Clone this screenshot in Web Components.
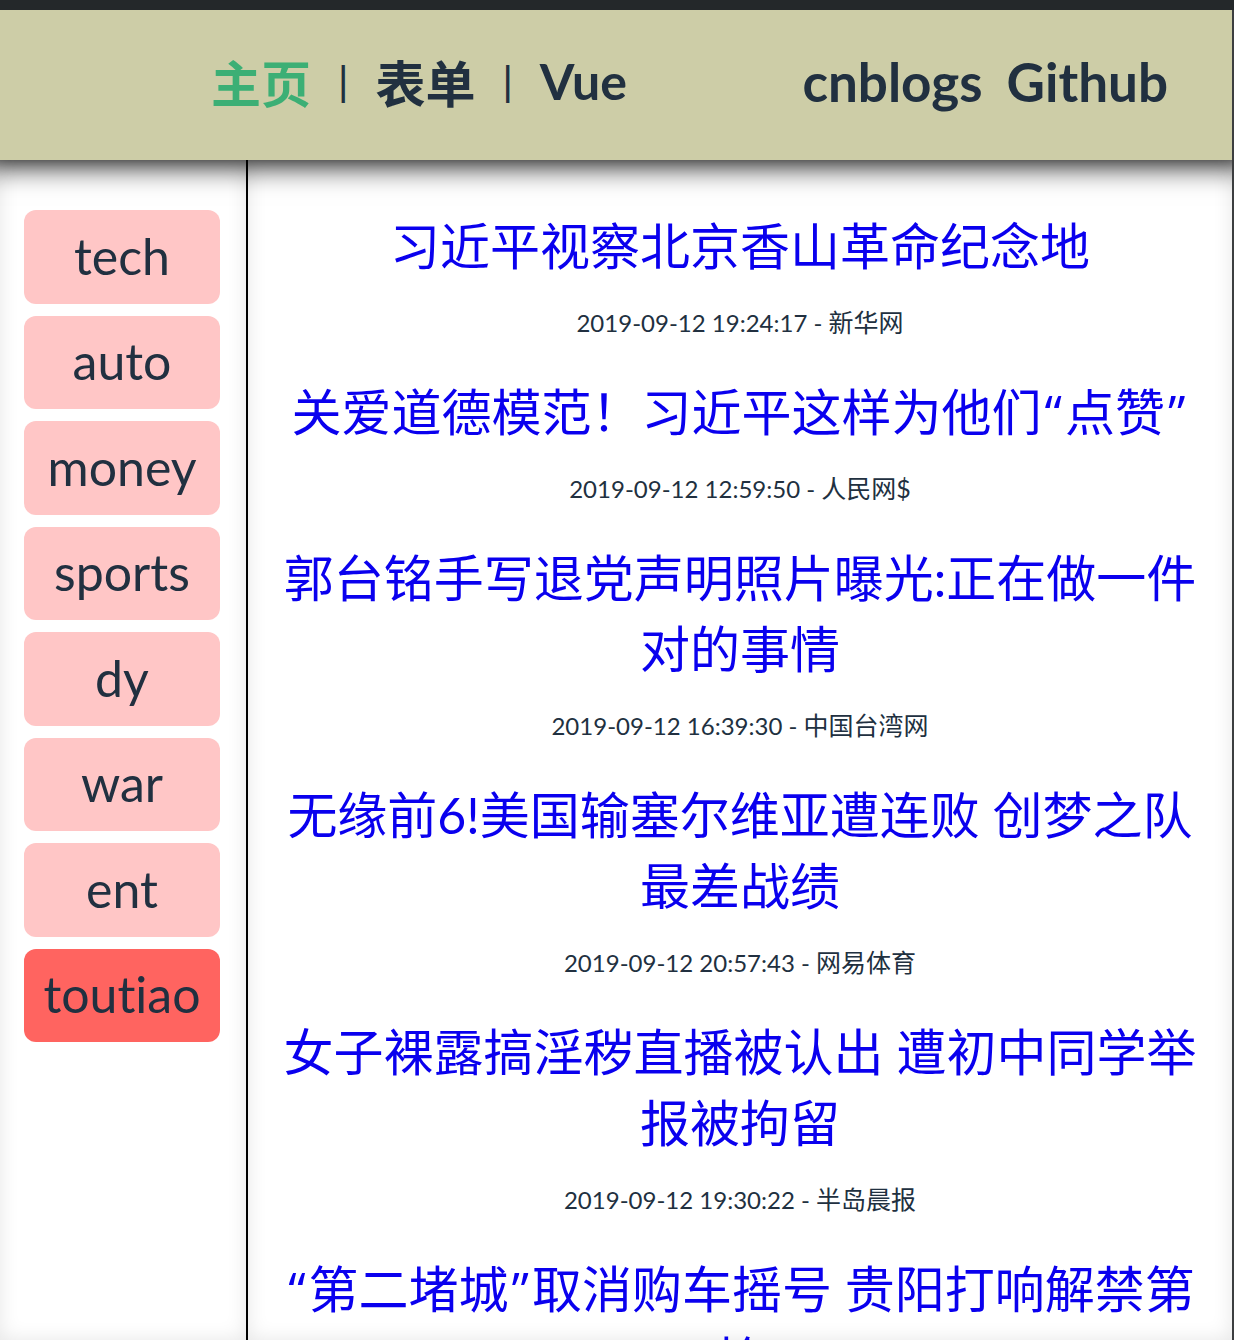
<!DOCTYPE html>
<html lang="zh-CN">
<head>
<meta charset="utf-8">
<meta name="viewport" content="width=device-width, initial-scale=1">
<title>News</title>
<style>
html, body { height: 100%; }
body { margin: 0; overflow: hidden; background: #fff; color: #213040; font-family: Lato, "Noto Sans CJK SC", sans-serif; font-variant-ligatures: none; }
</style>
</head>
<body>
<news-app></news-app>
<script>
class NavBar extends HTMLElement {
  constructor() {
    super();
    this.attachShadow({ mode: 'open' }).innerHTML = `
      <style>
        :host { display: block; position: relative; z-index: 1; background: #cdcda7; box-shadow: 0 -16px 28px 20px #000; }
        nav { display: flex; align-items: center; justify-content: space-between; height: 150px; box-sizing: border-box; padding: 0 64px 8px 211px; font-size: 50px; font-weight: 700; }
        .main { display: flex; align-items: center; gap: 27px; }
        .ext { display: flex; gap: 24px; font-size: 53px; }
        .bar { font: 400 40px "Liberation Sans", sans-serif; }
        a { color: #213040; text-decoration: none; white-space: nowrap; }
        a[aria-current] { color: #3caf75; }
      </style>
      <nav>
        <div class="main">
          <a href="#home" aria-current="page">主页</a><span class="bar">|</span>
          <a href="#form">表单</a><span class="bar">|</span>
          <a href="#vue">Vue</a>
        </div>
        <div class="ext"><a href="#cnblogs">cnblogs</a><a href="#github">Github</a></div>
      </nav>`;
  }
}

class CategoryButton extends HTMLElement {
  constructor() {
    super();
    this.attachShadow({ mode: 'open' }).innerHTML = `
      <style>
        :host { display: flex; flex: 1; }
        button { flex: 1; border: 0; border-radius: 12px; padding: 0 0 2px; background: #ffc6c6; color: inherit; font: inherit; font-variant-ligatures: none; font-size: 50px; line-height: 60px; cursor: pointer; }
        :host([active]) button { background: #ff6460; }
      </style>
      <button type="button"><slot></slot></button>`;
  }
}

class CategoryList extends HTMLElement {
  constructor() {
    super();
    this.attachShadow({ mode: 'open' }).innerHTML = `
      <style>
        :host { display: block; padding: 50px 26px 0 24px; border-right: 2px solid #000; box-shadow: inset 0 0 20px #0000001a; }
        div { display: flex; flex-direction: column; gap: 12px; min-height: 832px; }
      </style>
      <div><slot></slot></div>`;
  }
}

class NewsItem extends HTMLElement {
  constructor() {
    super();
    this.attachShadow({ mode: 'open' }).innerHTML = `
      <style>
        :host { display: block; text-align: center; padding-bottom: 37px; }
        a { display: block; color: #0a00ee; font-size: 50px; line-height: 71px; text-decoration: none; }
        ::slotted(span) { font-family: "Open Sans", sans-serif; line-height: 1; padding: 0 3px; }
        p { margin: 22px 0 0; font-size: 25px; line-height: 36px; }
        time { font-size: 24px; line-height: 1; }
      </style>
      <a href="#news"><slot></slot></a>
      <p><time></time></p>`;
  }
  connectedCallback() {
    const time = this.shadowRoot.querySelector('time');
    time.textContent = this.getAttribute('time') + ' - ';
    time.after(this.getAttribute('source'));
  }
}

class NewsApp extends HTMLElement {
  constructor() {
    super();
    this.attachShadow({ mode: 'open' }).innerHTML = `
      <style>
        :host { display: flex; flex-direction: column; height: 100%; box-sizing: border-box; border-top: 10px solid #24282a; background: #fff; overflow: hidden; }
        .page { flex: 1; min-height: 0; display: flex; flex-direction: column; border-right: 2px solid #3c3e40; overflow: hidden; }
        .body { flex: 1; min-height: 0; display: grid; grid-template-columns: 248px 1fr; }
        main { overflow: hidden; padding: 51px 30px 0; box-shadow: inset 0 0 20px #0000001a; }
      </style>
      <div class="page">
        <nav-bar></nav-bar>
        <div class="body">
          <category-list>
            <category-button>tech</category-button>
            <category-button>auto</category-button>
            <category-button>money</category-button>
            <category-button>sports</category-button>
            <category-button>dy</category-button>
            <category-button>war</category-button>
            <category-button>ent</category-button>
            <category-button active>toutiao</category-button>
          </category-list>
          <main>
            <news-item time="2019-09-12 19:24:17" source="新华网">习近平视察北京香山革命纪念地</news-item>
            <news-item time="2019-09-12 12:59:50" source="人民网$">关爱道德模范！习近平这样为他们<span>“</span>点赞<span>”</span></news-item>
            <news-item time="2019-09-12 16:39:30" source="中国台湾网">郭台铭手写退党声明照片曝光:正在做一件对的事情</news-item>
            <news-item time="2019-09-12 20:57:43" source="网易体育">无缘前6!美国输塞尔维亚遭连败 创梦之队最差战绩</news-item>
            <news-item time="2019-09-12 19:30:22" source="半岛晨报">女子裸露搞淫秽直播被认出 遭初中同学举报被拘留</news-item>
            <news-item time="2019-09-12 19:12:08" source="新华网"><span>“</span>第二堵城<span>”</span>取消购车摇号 贵阳打响解禁第枪</news-item>
          </main>
        </div>
      </div>`;
  }
}

customElements.define('nav-bar', NavBar);
customElements.define('category-button', CategoryButton);
customElements.define('category-list', CategoryList);
customElements.define('news-item', NewsItem);
customElements.define('news-app', NewsApp);
</script>
</body>
</html>
